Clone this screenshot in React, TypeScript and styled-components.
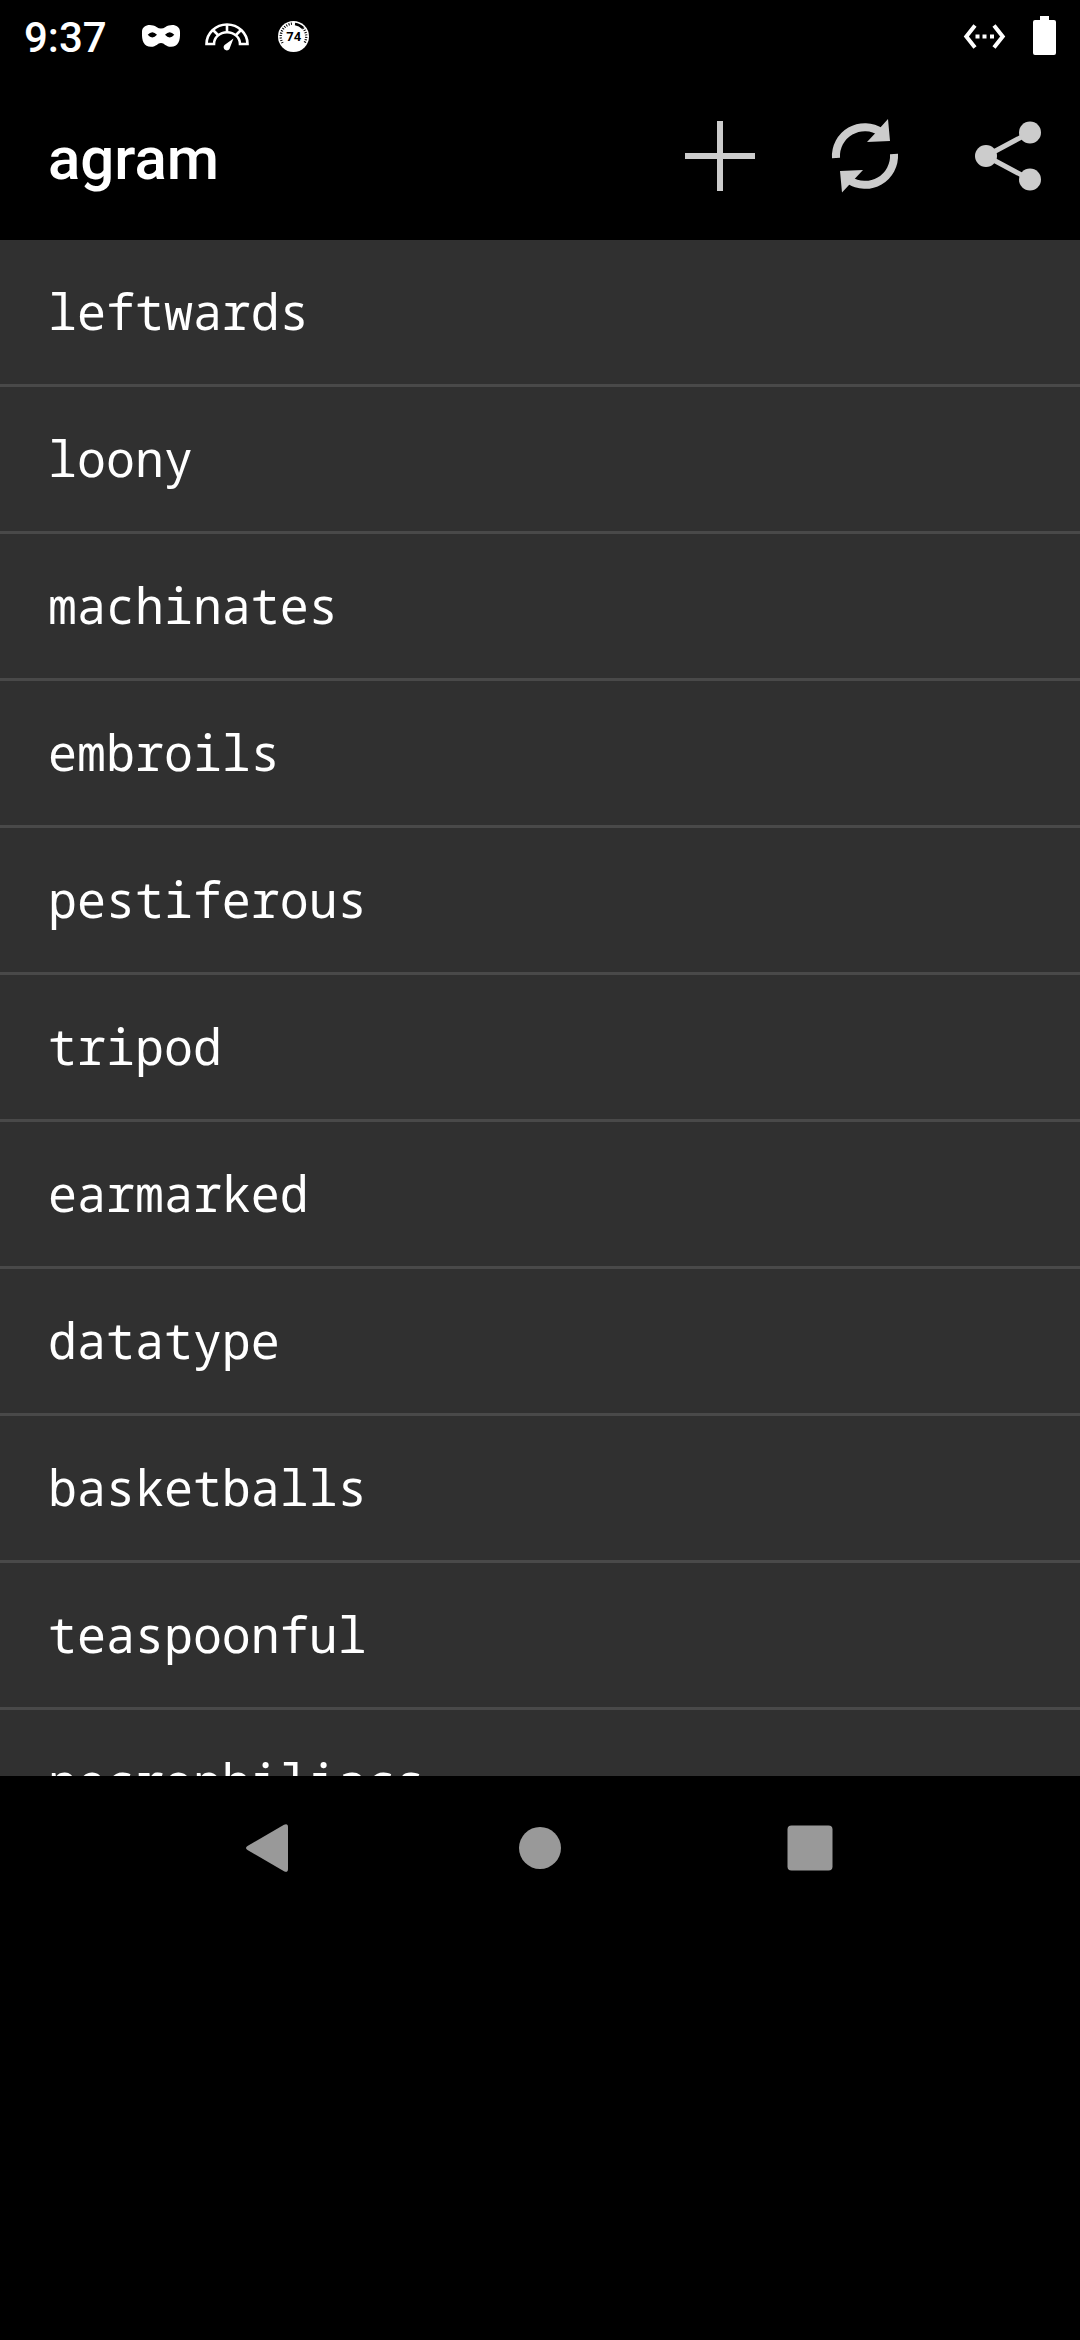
import React from "react";
import styled, { createGlobalStyle } from "styled-components";

const GlobalStyle = createGlobalStyle`
  *, *::before, *::after { box-sizing: border-box; }
  html, body { margin: 0; padding: 0; background: #000; }
`;

const Screen = styled.div`
  width: 1080px;
  height: 2340px;
  display: flex;
  flex-direction: column;
  background: #000;
  overflow: hidden;
`;

const StatusBar = styled.header`
  height: 72px;
  flex: none;
  display: flex;
  align-items: center;
  color: #fff;
  padding: 0 20px 0 24px;
`;

const Clock = styled.time`
  width: 112px;
  font: 500 42px/72px Roboto, sans-serif;
  white-space: nowrap;
  padding-top: 4px;
`;

const StatusIcons = styled.div`
  display: flex;
  align-items: center;
  flex: 1;
`;

const Glyph = styled.svg`
  display: block;
  flex: none;
`;

const AppBar = styled.div`
  height: 168px;
  flex: none;
  display: flex;
  align-items: center;
  justify-content: space-between;
  padding-left: 48px;
`;

const Title = styled.h1`
  margin: 0;
  padding-top: 5px;
  font: 500 60px/72px Roboto, sans-serif;
  color: #fff;
`;

const Actions = styled.div`
  display: flex;
`;

const ActionButton = styled.button`
  width: 144px;
  height: 168px;
  padding: 0;
  border: 0;
  background: none;
  color: #cccccc;
`;

const WordList = styled.ul`
  height: 1536px;
  flex: none;
  margin: 0;
  padding: 0;
  list-style: none;
  background: #303030;
  overflow: hidden;
`;

const WordRow = styled.li`
  height: 147px;
  border-bottom: 3px solid #494949;
  padding: 0 48px;
  font: 400 48.3px/142px "Noto Sans Mono", "Liberation Mono", monospace;
  color: #fff;
  white-space: nowrap;
`;

const NavBar = styled.nav`
  height: 144px;
  flex: none;
  display: flex;
  justify-content: center;
  color: #999999;
`;

const NavButton = styled.button`
  width: 270px;
  height: 144px;
  padding: 0;
  border: 0;
  background: none;
  color: inherit;
`;

const words = [
  "leftwards",
  "loony",
  "machinates",
  "embroils",
  "pestiferous",
  "tripod",
  "earmarked",
  "datatype",
  "basketballs",
  "teaspoonful",
  "necrophiliacs",
];

export default function App() {
  return (
    <Screen>
      <GlobalStyle />
      <StatusBar>
        <Clock>9:37</Clock>
        <StatusIcons>
          <Glyph width="60" height="72" viewBox="136 0 60 72">
            <path fill="currentColor" fillRule="evenodd" d="M142 32C142 24.500 151 23.500 156.500 27Q161 30 165.500 27C171 23.500 180 24.500 180 32C180.500 41 178 46.800 171 46.800C165.500 46.800 164.500 43 161 43C157.500 43 156.500 46.800 151 46.800C144 46.800 141.500 41 142 32ZM147.700 34.800Q152.300 29.500 157 34.800Q152.300 40 147.700 34.800ZM165 34.800Q169.700 29.500 174.300 34.800Q169.700 40 165 34.800Z" />
          </Glyph>
          <Glyph width="64" height="72" viewBox="196 0 64 72">
            <g fill="none" stroke="currentColor" strokeWidth="2.6">
              <path d="M206.500 44A20.500 19.500 0 0 1 247.500 44H240A13 11.800 0 0 0 214 44Z" />
              <path d="M227 24V32M213 30L218 35M241 30L236 35" />
            </g>
            <path fill="currentColor" d="M233.500 38.500L230 47.500A3.200 3.200 0 1 1 224.500 45Z" />
          </Glyph>
          <Glyph width="60" height="72" viewBox="260 0 60 72">
            <circle cx="293.500" cy="36.500" r="15.500" fill="currentColor" />
            <path d="M282.500 43A13 13 0 0 1 293 23.500" fill="none" stroke="#000" strokeWidth="2.400" strokeDasharray="1 1.400" />
            <path d="M303 28A13 13 0 0 1 304.500 43" fill="none" stroke="#000" strokeWidth="2.400" strokeDasharray="1 1.400" />
            <path d="M295 24A13 13 0 0 1 303 28" fill="none" stroke="#000" strokeWidth="2.600" />
            <text x="293.700" y="41.400" textAnchor="middle" fontFamily="Roboto, sans-serif" fontWeight="700" fontSize="13">74</text>
          </Glyph>
        </StatusIcons>
        <Glyph width="100" height="72" viewBox="960 0 100 72">
          <path d="M975 25.500L966.300 36.500L975 47.500M994 25.500L1002.700 36.500L994 47.500" fill="none" stroke="currentColor" strokeWidth="4" />
          <path fill="currentColor" d="M975.500 34.500h4v4h-4zM982.500 34.500h4v4h-4zM990 34.500h4v4h-4zM1040 16h9v4h5q2 0 2 2v31q0 2-2 2h-19q-2 0-2-2v-31q0-2 2-2h5z" />
        </Glyph>
      </StatusBar>

      <AppBar>
        <Title>agram</Title>
        <Actions>
          <ActionButton aria-label="Add">
            <Glyph width="144" height="168" viewBox="648 72 144 168">
              <path fill="currentColor" d="M717 121h6v32h32v6h-32v32h-6v-32h-32v-6h32z" />
            </Glyph>
          </ActionButton>
          <ActionButton aria-label="Refresh">
            <Glyph width="144" height="168" viewBox="792 72 144 168">
              <g fill="none" stroke="currentColor" strokeWidth="8">
                <path d="M836 158A29 29 0 0 1 881 132" />
                <path d="M894 154A29 29 0 0 1 849 180" />
              </g>
              <path fill="currentColor" d="M888 119L890 141L867 142L874.500 134ZM840 171L863 170L855.500 178L842 192.500Z" />
            </Glyph>
          </ActionButton>
          <ActionButton aria-label="Share">
            <Glyph width="144" height="168" viewBox="936 72 144 168">
              <path d="M1030 132.500L986 156L1030 179.500" fill="none" stroke="currentColor" strokeWidth="5" />
              <g fill="currentColor">
                <circle cx="1030" cy="132.500" r="11" />
                <circle cx="986" cy="156" r="11" />
                <circle cx="1030" cy="179.500" r="11" />
              </g>
            </Glyph>
          </ActionButton>
        </Actions>
      </AppBar>

      <WordList>
        {words.map((word) => (
          <WordRow key={word}>{word}</WordRow>
        ))}
      </WordList>

      <NavBar>
        <NavButton aria-label="Back">
          <Glyph width="270" height="144" viewBox="135 1776 270 144">
            <path fill="currentColor" d="M247.500 1846L284 1824.700Q288 1823 288 1827V1869Q288 1873 284 1871.300L247.500 1850Q244.500 1848 247.500 1846Z" />
          </Glyph>
        </NavButton>
        <NavButton aria-label="Home">
          <Glyph width="270" height="144" viewBox="405 1776 270 144">
            <circle cx="540" cy="1848" r="21" fill="currentColor" />
          </Glyph>
        </NavButton>
        <NavButton aria-label="Recents">
          <Glyph width="270" height="144" viewBox="675 1776 270 144">
            <rect x="787.500" y="1825.500" width="45" height="45" rx="4" fill="currentColor" />
          </Glyph>
        </NavButton>
      </NavBar>
    </Screen>
  );
}
